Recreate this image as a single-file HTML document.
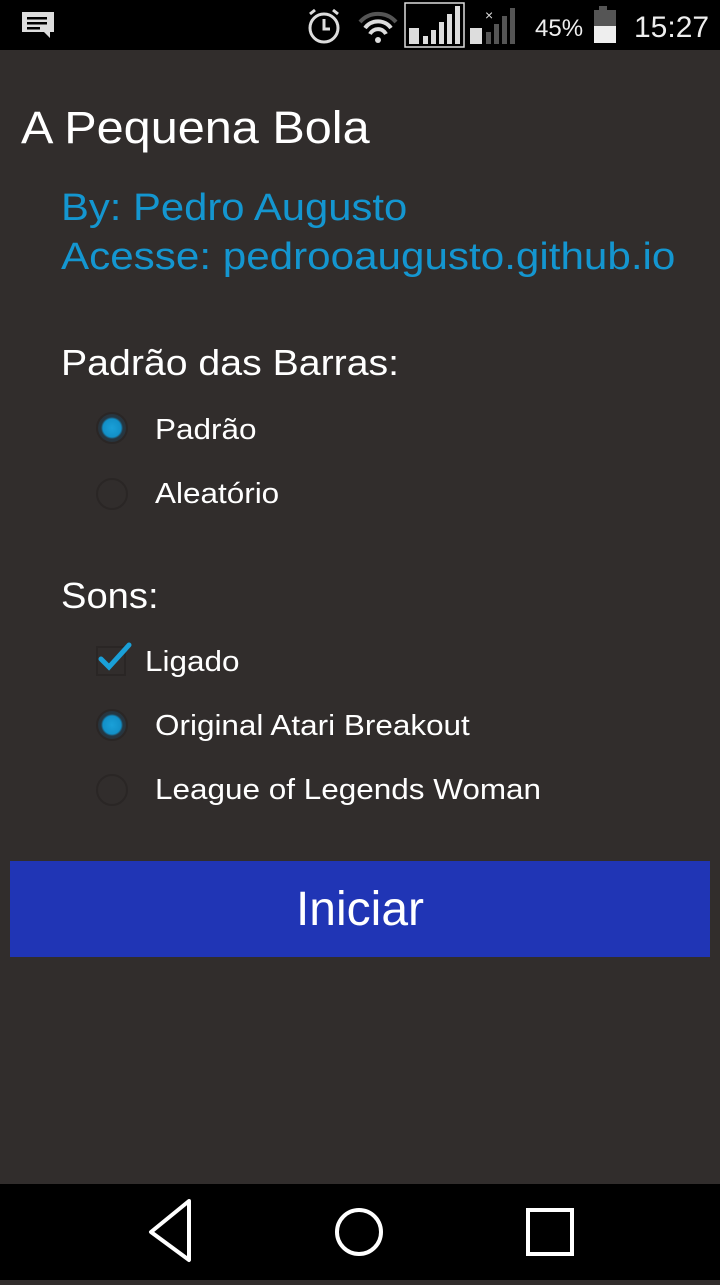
<!DOCTYPE html><html><head><style>
body{margin:0;width:720px;height:1280px;background:#312d2c;font-family:"Liberation Sans",sans-serif;position:relative;overflow:hidden}
.a{position:absolute;white-space:nowrap;line-height:1;transform-origin:0 0}
.sb{position:absolute;top:0;left:0;width:720px;height:50px;background:#000}
.nb{position:absolute;top:1184px;left:0;width:720px;height:96px;background:#000}
.r{position:absolute;width:32px;height:32px;border-radius:50%;border:2px solid #2a2625;box-sizing:border-box}
.r.on{background:radial-gradient(circle,#1aa0d8 0,#1290c8 9px,#253844 11px,#2b3036 16px)}
.t{color:#fff;font-size:29px;transform:scaleX(1.085)}
</style></head><body>
<div class="sb">
<svg width="720" height="50" style="position:absolute;left:0;top:0">
<path d="M22 12h32v20h-4v6l-6-6H22z" fill="#ddd"/><rect x="27" y="17" width="20" height="2.5" fill="#000"/><rect x="27" y="22" width="20" height="2.5" fill="#000"/><rect x="27" y="27" width="13" height="2.5" fill="#000"/>
<circle cx="324" cy="28" r="14" fill="none" stroke="#ddd" stroke-width="3"/><path d="M324 19v10h6" stroke="#ddd" stroke-width="3" fill="none"/><path d="M310 14l5-4M338 14l-5-4" stroke="#ddd" stroke-width="3"/>
<path d="M360 22a24 24 0 0 1 36 0" stroke="#555" stroke-width="4" fill="none"/><path d="M365 28a16 16 0 0 1 26 0M370 34a9 9 0 0 1 16 0" stroke="#ddd" stroke-width="4" fill="none"/><circle cx="378" cy="40" r="3" fill="#ddd"/>
<rect x="405" y="3" width="59" height="44" fill="none" stroke="#ddd" stroke-width="1.5"/>
<rect x="409" y="28" width="10" height="16" fill="#ddd"/><rect x="423" y="36" width="5" height="8" fill="#ddd"/><rect x="431" y="30" width="5" height="14" fill="#ddd"/><rect x="439" y="22" width="5" height="22" fill="#ddd"/><rect x="447" y="14" width="5" height="30" fill="#ddd"/><rect x="455" y="6" width="5" height="38" fill="#ddd"/>
<rect x="470" y="28" width="12" height="16" fill="#ddd"/><rect x="486" y="32" width="5" height="12" fill="#555"/><rect x="494" y="24" width="5" height="20" fill="#555"/><rect x="502" y="16" width="5" height="28" fill="#555"/><rect x="510" y="8" width="5" height="36" fill="#555"/>
<text x="485" y="20" fill="#ddd" font-size="14" font-family="Liberation Sans">×</text>
<text x="535" y="36" fill="#eee" font-size="24" font-family="Liberation Sans">45%</text>
<rect x="599" y="6" width="8" height="4" fill="#555"/><rect x="594" y="10" width="22" height="33" fill="#555"/><rect x="594" y="26" width="22" height="17" fill="#eee"/>
<text x="634" y="37" fill="#eee" font-size="30" font-family="Liberation Sans">15:27</text>
</svg></div>
<div class="a" style="left:21px;top:105px;font-size:45px;color:#fff;transform:scaleX(1.08)">A Pequena Bola</div>
<div class="a" style="left:61px;top:189px;font-size:38px;color:#1496d0;transform:scaleX(1.1)">By: Pedro Augusto</div>
<div class="a" style="left:61px;top:238px;font-size:38px;color:#1496d0;transform:scaleX(1.11)">Acesse: pedrooaugusto.github.io</div>
<div class="a" style="left:61px;top:345px;font-size:36px;color:#fff;transform:scaleX(1.09)">Padrão das Barras:</div>
<div class="r on" style="left:96px;top:412px"></div><div class="a t" style="left:155px;top:416px">Padrão</div>
<div class="r" style="left:96px;top:478px"></div><div class="a t" style="left:155px;top:480px">Aleatório</div>
<div class="a" style="left:61px;top:578px;font-size:36px;color:#fff;transform:scaleX(1.06)">Sons:</div>
<div style="position:absolute;left:96px;top:646px;width:30px;height:30px;border:2px solid #2a2625;box-sizing:border-box"></div>
<svg style="position:absolute;left:96px;top:640px" width="40" height="34"><path d="M5 19l8 8L33 5" stroke="#1aa0d8" stroke-width="5" fill="none" stroke-linecap="round"/></svg>
<div class="a t" style="left:145px;top:648px">Ligado</div>
<div class="r on" style="left:96px;top:709px"></div><div class="a t" style="left:155px;top:712px">Original Atari Breakout</div>
<div class="r" style="left:96px;top:774px"></div><div class="a t" style="left:155px;top:776px">League of Legends Woman</div>
<div style="position:absolute;left:10px;top:861px;width:700px;height:96px;background:#2035b5;color:#fff;font-size:48px;text-align:center;line-height:98px">Iniciar</div>
<div class="nb"><svg width="720" height="96">
<path d="M189 17L151 48l38 28z" fill="none" stroke="#fff" stroke-width="4" stroke-linejoin="round"/>
<circle cx="359" cy="48" r="22" fill="none" stroke="#fff" stroke-width="4"/>
<rect x="528" y="26" width="44" height="44" fill="none" stroke="#fff" stroke-width="4"/>
</svg></div>
</body></html>
